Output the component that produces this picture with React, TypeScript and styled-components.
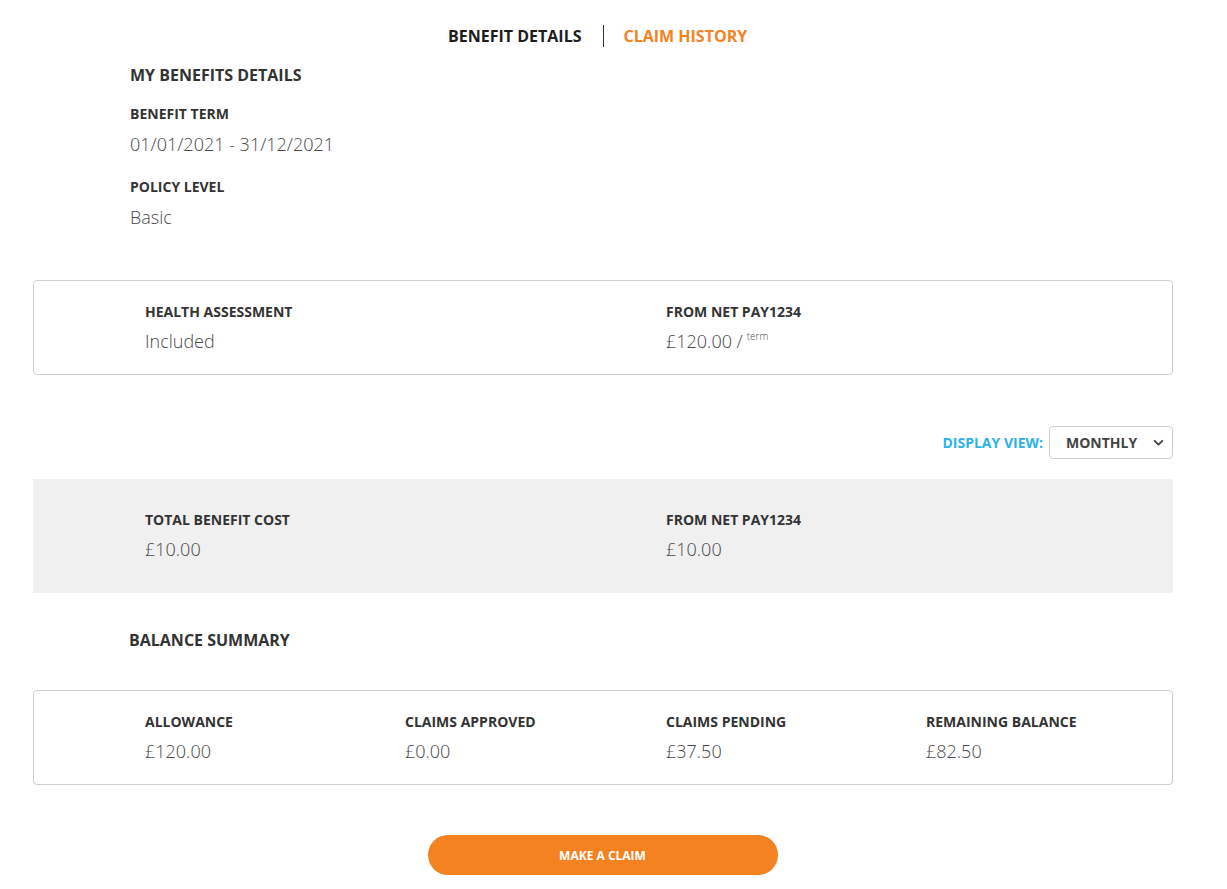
import styled, { createGlobalStyle } from 'styled-components'

const GlobalStyle = createGlobalStyle`
  html,
  body {
    margin: 0;
    padding: 0;
    background: #fff;
    font-family: 'Open Sans', 'Noto Sans', sans-serif;
    color: #333;
  }

  * {
    box-sizing: border-box;
  }
`

const Page = styled.div`
  width: 1140px;
  margin-left: 33px;
  padding-top: 25px;
  padding-bottom: 14px;
`

const Tabs = styled.nav`
  display: grid;
  grid-template-columns: 1fr auto 1fr;
  align-items: center;
`

const Tab = styled.span<{ $active?: boolean }>`
  font-size: 16px;
  font-weight: 700;
  line-height: 22px;
  color: ${(p) => (p.$active ? '#f58220' : '#1d1d1d')};
  padding: 0 21px 0 20px;
  justify-self: ${(p) => (p.$active ? 'start' : 'end')};
`

const Divider = styled.span`
  width: 1px;
  height: 22px;
  background: #333;
`

const Intro = styled.section`
  padding-left: 97px;
  margin-top: 17px;
`

const Heading = styled.h2<{ $indent?: number; $top?: number }>`
  margin: ${(p) => p.$top ?? 0}px 0 0;
  font-size: 16px;
  font-weight: 700;
  line-height: 22px;
  color: #333;
  padding-left: ${(p) => p.$indent ?? 0}px;
`

const Label = styled.div`
  font-size: 14px;
  font-weight: 700;
  line-height: 19px;
  color: #333;
`

const Value = styled.div`
  font-family: 'Open Sans Light', 'Open Sans', sans-serif;
  font-size: 18px;
  font-weight: 300;
  line-height: 25px;
  color: #4a4a4a;
  margin-top: 8px;
`

const Field = styled.div`
  margin-top: 18px;

  & + & {
    margin-top: 20px;
  }

  & > ${Value} {
    margin-top: 9px;
  }
`

const Sup = styled.sup`
  font-size: 10px;
  margin-left: 4px;
  vertical-align: 8px;
  line-height: 0;
`

const Card = styled.div<{ $cols: number; $shaded?: boolean; $top: number }>`
  display: grid;
  grid-template-columns: ${(p) =>
    p.$cols === 2 ? '521px 1fr' : '260px 261px 260px 1fr'};
  margin-top: ${(p) => p.$top}px;
  padding: ${(p) => (p.$shaded ? '31px 0 31px 112px' : '21px 0 20px 111px')};
  border: ${(p) => (p.$shaded ? 'none' : '1px solid #cfcfcf')};
  border-radius: ${(p) => (p.$shaded ? '0' : '4px')};
  background: ${(p) => (p.$shaded ? '#f0f0f0' : '#fff')};
`

const Cell = styled.div``

const ViewBar = styled.div`
  display: flex;
  justify-content: flex-end;
  align-items: center;
  gap: 6px;
  margin-top: 51px;
`

const ViewLabel = styled.span`
  font-size: 14px;
  font-weight: 700;
  color: #2bb3e8;
`

const Select = styled.div`
  width: 124px;
  height: 33px;
  border: 1px solid #cfcfcf;
  border-radius: 4px;
  display: flex;
  align-items: center;
  justify-content: space-between;
  padding: 0 7px 0 16px;
  font-size: 14px;
  font-weight: 700;
  color: #444;
`

const Chevron = () => (
  <svg width="13" height="13" viewBox="0 0 24 24" fill="none" stroke="#444" strokeWidth="3.5" strokeLinecap="round" strokeLinejoin="round">
    <polyline points="5 9 12 16 19 9" />
  </svg>
)

const Footer = styled.div`
  display: flex;
  justify-content: center;
  margin-top: 50px;
  margin-left: -1px;
`

const ClaimButton = styled.button`
  width: 350px;
  height: 40px;
  border: none;
  border-radius: 20px;
  background: #f58220;
  color: #fff;
  font-family: 'Open Sans', sans-serif;
  font-size: 12px;
  font-weight: 700;
  cursor: pointer;
`

const summary = [
  { label: 'ALLOWANCE', value: '£120.00' },
  { label: 'CLAIMS APPROVED', value: '£0.00' },
  { label: 'CLAIMS PENDING', value: '£37.50' },
  { label: 'REMAINING BALANCE', value: '£82.50' },
]

export const App = (): JSX.Element => {
  return (
    <Page>
      <GlobalStyle />
      <Tabs>
        <Tab>BENEFIT DETAILS</Tab>
        <Divider />
        <Tab $active>CLAIM HISTORY</Tab>
      </Tabs>

      <Intro>
        <Heading>MY BENEFITS DETAILS</Heading>
        <Field>
          <Label>BENEFIT TERM</Label>
          <Value>01/01/2021 - 31/12/2021</Value>
        </Field>
        <Field>
          <Label>POLICY LEVEL</Label>
          <Value>Basic</Value>
        </Field>
      </Intro>

      <Card $cols={2} $top={50}>
        <Cell>
          <Label>HEALTH ASSESSMENT</Label>
          <Value>Included</Value>
        </Cell>
        <Cell>
          <Label>FROM NET PAY1234</Label>
          <Value>
            £120.00 /<Sup>term</Sup>
          </Value>
        </Cell>
      </Card>

      <ViewBar>
        <ViewLabel>DISPLAY VIEW:</ViewLabel>
        <Select>
          MONTHLY
          <Chevron />
        </Select>
      </ViewBar>

      <Card $cols={2} $shaded $top={20}>
        <Cell>
          <Label>TOTAL BENEFIT COST</Label>
          <Value>£10.00</Value>
        </Cell>
        <Cell>
          <Label>FROM NET PAY1234</Label>
          <Value>£10.00</Value>
        </Cell>
      </Card>

      <Heading $indent={96} $top={36}>BALANCE SUMMARY</Heading>

      <Card $cols={4} $top={39}>
        {summary.map((s) => (
          <Cell key={s.label}>
            <Label>{s.label}</Label>
            <Value>{s.value}</Value>
          </Cell>
        ))}
      </Card>

      <Footer>
        <ClaimButton>MAKE A CLAIM</ClaimButton>
      </Footer>
    </Page>
  )
}

export default App
